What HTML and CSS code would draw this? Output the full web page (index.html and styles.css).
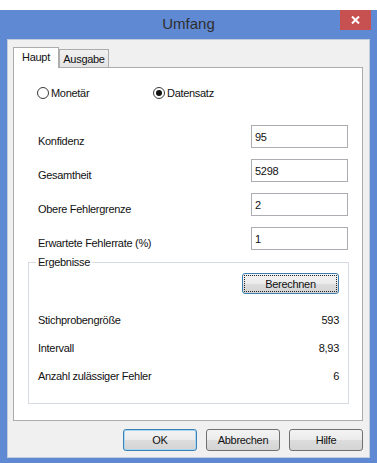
FILE: index.html
```html
<!DOCTYPE html>
<html lang="de">
<head>
  <meta charset="UTF-8">
  <title>Umfang</title>
  <link rel="stylesheet" href="styles.css">
</head>

<body>
  <div class="window">
    <div class="titlebar">
      <span class="title">Umfang</span>
      <span class="close">
        <svg width="9" height="8" viewBox="0 0 9 8"><path d="M1 0.5 L8 7.5 M8 0.5 L1 7.5" stroke="#fff" stroke-width="2"/></svg>
      </span>
    </div>

    <div class="client">
      <!-- Tabs -->
      <div class="tabs">
        <div class="tab active">Haupt</div>
        <div class="tab">Ausgabe</div>
      </div>

      <div class="panel">
        <div class="mode">
          <label class="radio"><input type="radio" name="mode">Monetär</label>
          <label class="radio"><input type="radio" name="mode" checked>Datensatz</label>
        </div>

        <div class="field"><label>Konfidenz</label><input type="text" value="95"></div>
        <div class="field"><label>Gesamtheit</label><input type="text" value="5298"></div>
        <div class="field"><label>Obere Fehlergrenze</label><input type="text" value="2"></div>
        <div class="field"><label>Erwartete Fehlerrate (%)</label><input type="text" value="1"></div>

        <!-- Results group -->
        <fieldset class="results">
          <legend>Ergebnisse</legend>
          <div class="calc"><button class="btn focused">Berechnen</button></div>
          <div class="result first"><span>Stichprobengröße</span><span>593</span></div>
          <div class="result"><span>Intervall</span><span>8,93</span></div>
          <div class="result"><span>Anzahl zulässiger Fehler</span><span>6</span></div>
        </fieldset>
      </div>

      <div class="actions">
        <button class="btn default">OK</button>
        <button class="btn">Abbrechen</button>
        <button class="btn">Hilfe</button>
      </div>
    </div>
  </div>
</body>
</html>
```

FILE: styles.css
```css
body {
  margin: 0;
  padding-top: 10px;
  background: #fff;
  font-family: "Liberation Sans", Arial, sans-serif;
  font-size: 11px;
  letter-spacing: -0.3px;
  color: #111;
}

.window {
  width: 377px;
  height: 453px;
  box-sizing: border-box;
  padding: 0 7px 5px 7px;
  background: #6089d4;
  display: flex;
  flex-direction: column;
}

.titlebar {
  height: 29px;
  position: relative;
  display: flex;
  justify-content: center;
  align-items: center;
}

.title {
  font-size: 15px;
  letter-spacing: 0;
  color: #2e2e2e;
  margin-top: -2px;
}

.close {
  position: absolute;
  top: 0;
  right: -1px;
  width: 31px;
  height: 20px;
  background: #c75050;
  display: flex;
  justify-content: center;
  align-items: center;
}

.client {
  flex: 1;
  background: #f0f0f0;
  border: 1px solid #c3ccda;
  padding: 7px 6px 0 5px;
}

.tabs {
  display: flex;
  align-items: flex-end;
  height: 20px;
}

.tab {
  height: 18px;
  box-sizing: border-box;
  width: 50px;
  border: 1px solid #acacac;
  border-bottom: none;
  background: linear-gradient(#f0f0f0, #e5e5e5);
  display: flex;
  justify-content: center;
  align-items: center;
  padding-top: 1px;
}

.tab.active {
  width: 46px;
  height: 21px;
  margin-bottom: -1px;
  background: #fff;
  position: relative;
  z-index: 1;
  padding-top: 0;
  padding-bottom: 2px;
}

.panel {
  height: 354px;
  box-sizing: border-box;
  background: #fff;
  border: 1px solid #acacac;
  padding: 19px 13px 0 14px;
}

.mode {
  display: flex;
  height: 12px;
  padding-left: 9px;
  margin-bottom: 26px;
}

.radio {
  display: flex;
  align-items: center;
  gap: 2px;
  width: 116px;
}

.radio input {
  appearance: none;
  margin: 0;
  width: 12px;
  height: 12px;
  border: 1px solid #3a3a3a;
  border-radius: 50%;
  background: #fff;
  display: grid;
  place-items: center;
}

.radio input:checked::after {
  content: "";
  width: 6px;
  height: 6px;
  border-radius: 50%;
  background: #111;
}

.field {
  display: flex;
  justify-content: space-between;
  align-items: flex-end;
  height: 23px;
  margin-bottom: 11px;
  padding-left: 10px;
  padding-right: 1px;
}

.field label {
  line-height: 13px;
}

.field input {
  width: 97px;
  height: 23px;
  box-sizing: border-box;
  border: 1px solid #abadb3;
  padding: 0 3px;
  font-family: inherit;
  font-size: 11px;
  letter-spacing: -0.3px;
  color: #111;
}

.results {
  margin: -5px 0 0 0;
  padding: 0 9px 13px 9px;
  border: 1px solid #d5dbe0;
}

.results legend {
  margin-left: -2px;
  padding: 0 2px;
  line-height: 13px;
}

.calc {
  display: flex;
  justify-content: flex-end;
  margin-top: 4px;
}

.result {
  height: 28px;
  display: flex;
  justify-content: space-between;
  align-items: center;
}

.result.first {
  margin-top: 12px;
}

.btn {
  height: 22px;
  width: 74px;
  box-sizing: border-box;
  border: 1px solid #707070;
  border-radius: 3px;
  background: linear-gradient(#f3f3f3, #ebebeb 50%, #dddddd 50%, #d4d4d4);
  font-family: inherit;
  font-size: 11px;
  letter-spacing: -0.3px;
  color: #111;
  padding: 0;
}

.btn.focused {
  width: 97px;
  height: 21px;
  border-color: #3c7fb1;
  outline: 1px dotted #222;
  outline-offset: -3px;
}

.btn.default {
  border-color: #3c7fb1;
  box-shadow: inset 0 0 0 1px #a7d9f5;
}

.actions {
  display: flex;
  justify-content: flex-end;
  gap: 9px;
  margin-top: 8px;
}
```
